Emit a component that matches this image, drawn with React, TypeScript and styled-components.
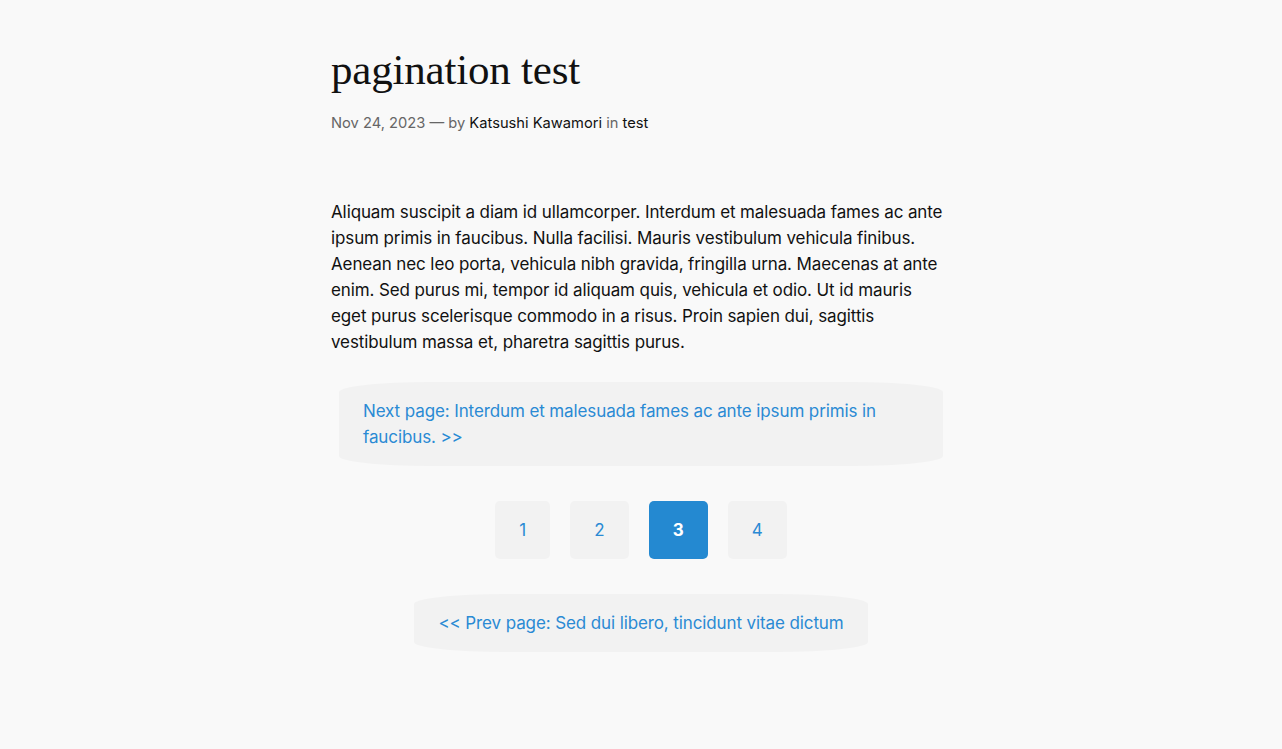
import React from "react";
import styled, { createGlobalStyle } from "styled-components";

const GlobalStyle = createGlobalStyle`
  html, body {
    margin: 0;
    padding: 0;
    background: #f9f9f9;
  }
  body {
    font-family: Inter, "Noto Sans", sans-serif;
    color: #111;
  }
`;

const Page = styled.main`
  width: 612px;
  margin: 0 auto;
  padding: 44px 0 80px;
  position: relative;
  left: -4px;
`;

const Title = styled.h1`
  font-family: "Liberation Serif", "DejaVu Serif", serif;
  font-weight: 400;
  font-size: 43px;
  line-height: 52px;
  letter-spacing: -0.2px;
  margin: 0;
  color: #111;
`;

const Meta = styled.div`
  margin-top: 17px;
  font-size: 14.7px;
  line-height: 20px;
  color: #666;
`;

const MetaLink = styled.a`
  color: #111;
  text-decoration: none;
`;

const Body = styled.p`
  margin: 66px 0 0;
  font-size: 17px;
  line-height: 26px;
  letter-spacing: -0.11px;
  color: #111;
`;

const NavArea = styled.div`
  padding-left: 8px;
  margin-top: 27px;
`;

const NavBox = styled.a<{ $wide?: boolean }>`
  display: block;
  box-sizing: border-box;
  background: #f2f2f2;
  border-radius: 90px / 10px;
  padding: 16px 24px;
  font-size: 17px;
  line-height: 26px;
  letter-spacing: -0.11px;
  color: #2a8ad4;
  text-decoration: none;
  width: ${(p) => (p.$wide ? "100%" : "fit-content")};
  margin: ${(p) => (p.$wide ? "0" : "35px auto 0")};
`;

const Pager = styled.nav`
  display: flex;
  justify-content: center;
  gap: 20px;
  margin-top: 35px;
`;

const PageButton = styled.a<{ $active?: boolean }>`
  display: flex;
  align-items: center;
  justify-content: center;
  height: 58px;
  padding: 0 24px;
  box-sizing: border-box;
  border-radius: 5px;
  font-size: 17px;
  font-weight: ${(p) => (p.$active ? 700 : 400)};
  color: ${(p) => (p.$active ? "#fff" : "#2a8ad4")};
  background: ${(p) => (p.$active ? "#2489d1" : "#f2f2f2")};
  text-decoration: none;
`;

const pages = [1, 2, 3, 4];

export default function App() {
  return (
    <>
      <GlobalStyle />
      <Page>
        <Title>pagination test</Title>
        <Meta>
          Nov 24, 2023 — by <MetaLink href="#">Katsushi Kawamori</MetaLink> in{" "}
          <MetaLink href="#">test</MetaLink>
        </Meta>
        <Body>
          Aliquam suscipit a diam id ullamcorper. Interdum et malesuada fames
          ac ante ipsum primis in faucibus. Nulla facilisi. Mauris vestibulum
          vehicula finibus. Aenean nec leo porta, vehicula nibh gravida,
          fringilla urna. Maecenas at ante enim. Sed purus mi, tempor id
          aliquam quis, vehicula et odio. Ut id mauris eget purus scelerisque
          commodo in a risus. Proin sapien dui, sagittis vestibulum massa et,
          pharetra sagittis purus.
        </Body>
        <NavArea>
          <NavBox $wide href="#">
            Next page: Interdum et malesuada fames ac ante ipsum primis in
            faucibus. &gt;&gt;
          </NavBox>
          <Pager>
            {pages.map((n) => (
              <PageButton key={n} href="#" $active={n === 3}>
                {n}
              </PageButton>
            ))}
          </Pager>
          <NavBox href="#">
            &lt;&lt; Prev page: Sed dui libero, tincidunt vitae dictum
          </NavBox>
        </NavArea>
      </Page>
    </>
  );
}
